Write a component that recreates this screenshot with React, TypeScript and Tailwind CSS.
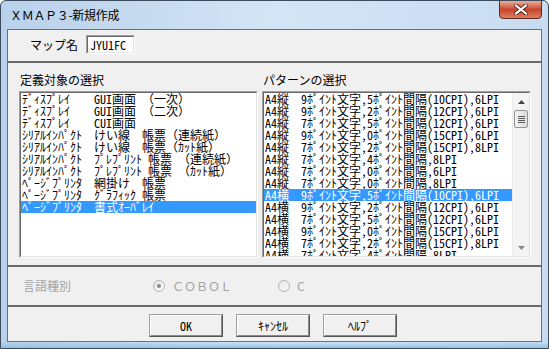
import React from 'react';

function isHalf(ch: string) {
  const c = ch.charCodeAt(0);
  return c <= 0x7e || (c >= 0xff61 && c <= 0xff9f);
}

function Mono({ text }: { text: string }) {
  return (
    <div className="flex h-[12px] leading-[12px] whitespace-pre font-['Noto_Sans_Mono_CJK_JP','Noto_Sans_CJK_JP',monospace]">
      {Array.from(text).map((ch, i) => (
        <span
          key={i}
          className={isHalf(ch) ? 'block shrink-0 w-[6px] h-[12px]' : 'block shrink-0 w-[12px] h-[12px]'}
        >
          {ch}
        </span>
      ))}
    </div>
  );
}

const leftItems = [
  'ﾃﾞｨｽﾌﾟﾚｲ    GUI画面 （一次）',
  'ﾃﾞｨｽﾌﾟﾚｲ    GUI画面 （二次）',
  'ﾃﾞｨｽﾌﾟﾚｲ    CUI画面',
  'ｼﾘｱﾙｲﾝﾊﾟｸﾄ  けい線　帳票（連続紙）',
  'ｼﾘｱﾙｲﾝﾊﾟｸﾄ  けい線　帳票（ｶｯﾄ紙）',
  'ｼﾘｱﾙｲﾝﾊﾟｸﾄ  ﾌﾟﾚﾌﾟﾘﾝﾄ 帳票 （連続紙）',
  'ｼﾘｱﾙｲﾝﾊﾟｸﾄ  ﾌﾟﾚﾌﾟﾘﾝﾄ 帳票 （ｶｯﾄ紙）',
  'ﾍﾟｰｼﾞﾌﾟﾘﾝﾀ  網掛け　帳票',
  'ﾍﾟｰｼﾞﾌﾟﾘﾝﾀ  ｸﾞﾗﾌｨｯｸ 帳票',
  'ﾍﾟｰｼﾞﾌﾟﾘﾝﾀ  書式ｵｰﾊﾞﾚｲ',
];
const leftSelected = 9;

const rightItems = [
  'A4縦  9ﾎﾟｲﾝﾄ文字,5ﾎﾟｲﾝﾄ間隔(10CPI),6LPI',
  'A4縦  9ﾎﾟｲﾝﾄ文字,2ﾎﾟｲﾝﾄ間隔(12CPI),6LPI',
  'A4縦  7ﾎﾟｲﾝﾄ文字,5ﾎﾟｲﾝﾄ間隔(12CPI),6LPI',
  'A4縦  9ﾎﾟｲﾝﾄ文字,0ﾎﾟｲﾝﾄ間隔(15CPI),6LPI',
  'A4縦  7ﾎﾟｲﾝﾄ文字,2ﾎﾟｲﾝﾄ間隔(15CPI),8LPI',
  'A4縦  7ﾎﾟｲﾝﾄ文字,4ﾎﾟｲﾝﾄ間隔,8LPI',
  'A4縦  7ﾎﾟｲﾝﾄ文字,0ﾎﾟｲﾝﾄ間隔,6LPI',
  'A4縦  7ﾎﾟｲﾝﾄ文字,0ﾎﾟｲﾝﾄ間隔,8LPI',
  'A4横  9ﾎﾟｲﾝﾄ文字,5ﾎﾟｲﾝﾄ間隔(10CPI),6LPI',
  'A4横  9ﾎﾟｲﾝﾄ文字,2ﾎﾟｲﾝﾄ間隔(12CPI),6LPI',
  'A4横  7ﾎﾟｲﾝﾄ文字,5ﾎﾟｲﾝﾄ間隔(12CPI),6LPI',
  'A4横  9ﾎﾟｲﾝﾄ文字,0ﾎﾟｲﾝﾄ間隔(15CPI),6LPI',
  'A4横  7ﾎﾟｲﾝﾄ文字,2ﾎﾟｲﾝﾄ間隔(15CPI),8LPI',
  'A4横  7ﾎﾟｲﾝﾄ文字,4ﾎﾟｲﾝﾄ間隔,8LPI',
];
const rightSelected = 8;

function Sunken({ className, children }: { className: string; children: React.ReactNode }) {
  return (
    <div className={`${className} border border-t-[#a0a0a0] border-l-[#a0a0a0] border-b-white border-r-white`}>
      <div className="w-full h-full border border-t-[#696969] border-l-[#696969] border-b-[#e3e3e3] border-r-[#e3e3e3] bg-white overflow-hidden">
        {children}
      </div>
    </div>
  );
}

function Button({ label }: { label: string }) {
  return (
    <div className="w-[74px] h-[23px] border border-t-[#a0a0a0] border-l-[#a0a0a0] border-b-[#555] border-r-[#555]">
      <div className="w-full h-full border border-t-white border-l-white border-b-[#8a8a8a] border-r-[#8a8a8a] bg-[#f0f0f0] flex items-center justify-center">
        <Mono text={label} />
      </div>
    </div>
  );
}

export default function App() {
  return (
    <div className="w-[549px] h-[349px] bg-white text-[12px] text-black font-['Noto_Sans_CJK_JP',sans-serif]">
      <div className="w-[549px] h-[349px] flex flex-col rounded-t-[6px] border border-[#3d4c5c] bg-linear-to-r from-[#b9d1ea] via-[#d3e4f5] to-[#c8dcf1] overflow-hidden">
        {/* Title bar */}
        <div className="relative h-[28px] flex items-center pl-[9px]">
          <span className="leading-[14px] tracking-[-0.3px]">ＸＭＡＰ３-新規作成</span>
          <div className="absolute top-[-1px] right-[6px] w-[43px] h-[19px] rounded-b-[4px] border border-[#5e2a22] bg-linear-to-b from-[#e9ad9c] via-[#c8442b] to-[#dc7d60] flex items-center justify-center">
            <svg width="14" height="11" viewBox="0 0 14 11">
              <path d="M2 1.5 L12 9.5 M12 1.5 L2 9.5" stroke="#5b2218" strokeWidth="4" strokeLinecap="square" />
              <path d="M2 1.5 L12 9.5 M12 1.5 L2 9.5" stroke="#ffffff" strokeWidth="2.2" strokeLinecap="square" />
            </svg>
          </div>
        </div>

        {/* Middle */}
        <div className="flex h-[313px]">
          <div className="w-[6px]" />
          <div className="w-[535px] h-[313px] border border-[#6f6f6f] bg-[#f0f0f0] flex flex-col">
            {/* Section 1 */}
            <div className="h-[31px] flex items-start pt-[5px] pl-[22px]">
              <div className="flex items-center h-[19px]">
                <span className="leading-[14px]">マップ名</span>
                <Sunken className="ml-[8px] w-[49px] h-[19px]">
                  <div className="pl-[2px] pt-[2px]">
                    <Mono text="JYU1FC" />
                  </div>
                </Sunken>
              </div>
            </div>
            <div className="h-[2px] bg-[#6b6b6b]" />

            {/* Section 2 */}
            <div className="h-[202px] flex pl-[11px] pr-[10px] gap-[4px]">
              <div className="w-[239px] flex flex-col">
                <div className="mt-[10px] ml-[1px] h-[14px] leading-[14px]">定義対象の選択</div>
                <Sunken className="mt-[4px] w-[239px] h-[167px]">
                  <div className="flex flex-col">
                    {leftItems.map((t, i) => (
                      <div
                        key={i}
                        className={i === leftSelected ? 'pl-[1px] bg-[#3399ff] text-white' : 'pl-[1px]'}
                      >
                        <Mono text={t} />
                      </div>
                    ))}
                  </div>
                </Sunken>
              </div>
              <div className="w-[269px] flex flex-col">
                <div className="mt-[10px] ml-[1px] h-[14px] leading-[14px]">パターンの選択</div>
                <Sunken className="mt-[4px] w-[269px] h-[167px]">
                  <div className="flex h-full">
                    <div className="flex-1 flex flex-col overflow-hidden">
                      {rightItems.map((t, i) => (
                        <div
                          key={i}
                          className={i === rightSelected ? 'pl-[1px] bg-[#3399ff] text-white' : 'pl-[1px]'}
                        >
                          <Mono text={t} />
                        </div>
                      ))}
                    </div>
                    <div className="w-[17px] h-full bg-[#f4f4f4] border-l border-[#ececec] flex flex-col">
                      <div className="h-[17px] flex items-center justify-center">
                        <svg width="7" height="4" viewBox="0 0 7 4">
                          <path d="M3.5 0 L7 4 L0 4 Z" fill="#444" />
                        </svg>
                      </div>
                      <div className="mx-[1px] h-[18px] rounded-[2px] border border-[#959595] bg-linear-to-r from-[#f4f4f4] to-[#dcdcdc] flex flex-col items-center justify-center gap-[1px]">
                        <div className="w-[7px] h-[1px] bg-[#5a5a5a]" />
                        <div className="w-[7px] h-[1px] bg-[#5a5a5a]" />
                        <div className="w-[7px] h-[1px] bg-[#5a5a5a]" />
                        <div className="w-[7px] h-[1px] bg-[#5a5a5a]" />
                      </div>
                      <div className="flex-1" />
                      <div className="h-[17px] flex items-center justify-center">
                        <svg width="7" height="4" viewBox="0 0 7 4">
                          <path d="M0 0 L7 0 L3.5 4 Z" fill="#888" />
                        </svg>
                      </div>
                    </div>
                  </div>
                </Sunken>
              </div>
            </div>
            <div className="h-[2px] bg-[#6b6b6b]" />

            {/* Section 3 */}
            <div className="h-[38px] flex items-center pl-[15px] text-[#a3a3a3]">
              <span className="leading-[14px]">言語種別</span>
              <div className="ml-[82px] w-[12px] h-[12px] rounded-full border border-[#b4b4b4] bg-linear-to-br from-[#e6e6e6] to-[#fafafa] flex items-center justify-center">
                <div className="w-[4px] h-[4px] rounded-full bg-[#8c8c8c]" />
              </div>
              <span className="ml-[7px] leading-[14px]">ＣＯＢＯＬ</span>
              <div className="ml-[46px] w-[12px] h-[12px] rounded-full border border-[#b4b4b4] bg-linear-to-br from-[#e6e6e6] to-[#fafafa]" />
              <span className="ml-[7px] leading-[14px]">C</span>
            </div>
            <div className="h-[2px] bg-[#6b6b6b]" />

            {/* Section 4 */}
            <div className="h-[34px] pt-[7px] pl-[141px] flex items-start gap-[13px]">
              <Button label="OK" />
              <Button label="ｷｬﾝｾﾙ" />
              <Button label="ﾍﾙﾌﾟ" />
            </div>
          </div>
          <div className="w-[6px]" />
        </div>
        <div className="h-[6px] bg-linear-to-b from-transparent to-[#8ec3e8]" />
      </div>
    </div>
  );
}
